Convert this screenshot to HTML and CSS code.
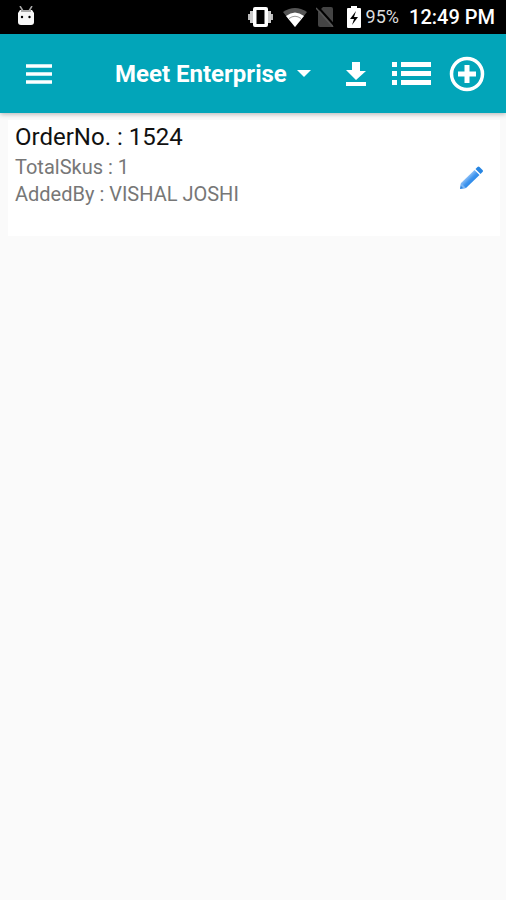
FILE: index.html
```html
<!DOCTYPE html>
<html lang="en">
<head>
<meta charset="utf-8">
<meta name="viewport" content="width=device-width, initial-scale=1">
<title>Orders</title>
<link rel="stylesheet" href="styles.css">
</head>
<body>
<div class="status-bar">
  <svg class="droid" width="18" height="20" viewBox="0 0 18 20" aria-hidden="true">
    <path d="M3 0l3 5M15 0l-3 5" stroke="#aaa" stroke-width="1.5"/>
    <path d="M3 4h12l2 3v9q0 3-3 3H4q-3 0-3-3V7z" fill="#f8f8f8"/>
    <path d="M4 5h10" stroke="#aaa" stroke-width="2"/>
    <circle cx="5" cy="11" r="1.2"/><circle cx="12.500" cy="11" r="1.2"/>
  </svg>
  <div class="status-icons">
    <svg width="27" height="20" viewBox="0 0 27 20" aria-hidden="true">
      <path d="M8 0h11q2 0 2 2v16q0 2-2 2H8q-2 0-2-2V2q0-2 2-2zM9.500 3v14h8V3z" fill="#fff" fill-rule="evenodd"/>
      <path d="M3 4h3v12H3zM21 4h3v12h-3z" fill="#ccc"/><path d="M1 7h2v6H1zM24 7h2v6h-2z" fill="#bbb"/>
    </svg>
    <svg width="24" height="19" viewBox="0 0 24 19" aria-hidden="true">
      <path d="M12 19L0 4Q12-4 24 4z" fill="#555"/>
      <path d="M12 19L3 8Q12 1 21 8z" fill="#fff"/>
      <path d="M6 10.500Q12 6 18 10.500" fill="none" stroke="#999" stroke-width="1"/>
    </svg>
    <svg class="no-sim" width="19" height="20" viewBox="0 0 19 20" aria-hidden="true">
      <path d="M7 0h8q2 0 2 2v18H4q-2 0-2-2V5z" fill="#444"/>
      <path d="M2 0l17 19" stroke="#000" stroke-width="2"/>
      <path d="M0 1l17 19" stroke="#555" stroke-width="1.5"/>
    </svg>
    <svg width="14" height="22" viewBox="0 0 14 22" aria-hidden="true">
      <path d="M4 0h6v2h3q1 0 1 1v18q0 1-1 1H1q-1 0-1-1V3q0-1 1-1h3z" fill="#fff"/>
      <path d="M9 5l-6 8h4l-2 6 6-8H7z"/>
    </svg>
  </div>
  <span class="battery-level">95%</span>
  <span class="clock">12:49 PM</span>
</div>
<header class="app-bar">
  <button class="icon-button" aria-label="Menu">
    <svg width="26" height="20" viewBox="0 0 26 20"><path d="M0 2h26M0 10h26M0 18h26" stroke="#fff" stroke-width="3.500"/></svg>
  </button>
  <div class="picker">
    <select class="picker-select" aria-label="Enterprise"><option>Meet Enterprise</option></select>
    <svg width="14" height="7" viewBox="0 0 14 7" aria-hidden="true"><path d="M0 0h14L7 7z" fill="#fff"/></svg>
  </div>
  <div class="actions">
    <button class="icon-button" aria-label="Download">
      <svg width="22" height="26" viewBox="0 0 22 26"><path d="M7 1h8v9h6L11 19 1 9h6zM1 21h20v4H1z" fill="#fff"/></svg>
    </button>
    <button class="icon-button" aria-label="List">
      <svg width="46" height="24" viewBox="-7 0 46 24"><path d="M0 0h5v5H0zM9 0h30v5H9zM0 9h5v5H0zM9 9h30v5H9zM0 18h5v5H0zM9 18h30v5H9z" fill="#fff"/></svg>
    </button>
    <button class="icon-button" aria-label="Add">
      <svg width="36" height="36" viewBox="0 0 36 36"><circle cx="18" cy="18" r="15.500" fill="none" stroke="#fff" stroke-width="3.500"/><path d="M18 9v18M9 18h18" stroke="#fff" stroke-width="5"/></svg>
    </button>
  </div>
</header>
<main class="orders">
  <article class="order">
    <div>
      <h1 class="order-number">OrderNo. : 1524</h1>
      <p class="order-detail">TotalSkus : 1</p>
      <p class="order-detail">AddedBy : VISHAL JOSHI</p>
    </div>
    <button class="icon-button" aria-label="Edit order">
      <svg width="24" height="24" viewBox="0 0 24 24">
        <defs><linearGradient id="pencil" x1="0.300" y1="0.300" x2="0.700" y2="0.700"><stop offset="0" stop-color="#a9d0fb"/><stop offset="0.550" stop-color="#3e94ee"/><stop offset="1" stop-color="#2384e6"/></linearGradient></defs>
        <path d="M2 17L15.500 4l5 5L7 22l-6 1z" fill="url(#pencil)"/>
        <path d="M1 23l1-6 5 5z" fill="#78b4f4"/><path d="M1 23l1-3 2 2z" fill="#2f83dd"/>
        <path d="M16.500 3l2-2q1-1 2 0l3 3q1 1 0 2l-2 2z" fill="#2685e2"/>
      </svg>
    </button>
  </article>
</main>
</body>
</html>
```
FILE: styles.css
```css
* {
  box-sizing: border-box;
}

body {
  margin: 0;
  min-height: 100vh;
  background: #fafafa;
  color: #111;
  font-family: Roboto, "Liberation Sans", sans-serif;
}

svg {
  display: block;
}

.status-bar {
  display: flex;
  align-items: center;
  height: 34px;
  padding: 0 11px 0 17px;
  background: #000;
  color: #fff;
}

.droid {
  margin-bottom: 2px;
}

.status-icons {
  display: flex;
  align-items: center;
  gap: 9px;
  margin-left: auto;
}

.no-sim {
  margin-right: 3px;
}

.battery-level {
  margin-left: 5px;
  color: #ddd;
  font-size: 18px;
  line-height: 20px;
}

.clock {
  margin-left: 10px;
  font-size: 20px;
  font-weight: 500;
  line-height: 20px;
}

.app-bar {
  display: flex;
  align-items: center;
  height: 79px;
  padding: 0 21px 0 26px;
  background: #02a5b9;
  box-shadow: 0 1px 5px rgba(0, 0, 0, 0.3);
}

.icon-button {
  padding: 0;
  border: 0;
  background: none;
  cursor: pointer;
}

.picker {
  display: flex;
  align-items: center;
  gap: 10px;
  margin-left: 63px;
}

.picker-select {
  appearance: none;
  padding: 0;
  border: 0;
  background: none;
  color: #fff;
  font-family: inherit;
  font-size: 24px;
  font-weight: 700;
  line-height: 32px;
}

.actions {
  display: flex;
  align-items: center;
  gap: 18px;
  margin-left: auto;
}

.orders {
  padding: 7px 6px 7px 8px;
}

.order {
  display: flex;
  align-items: center;
  justify-content: space-between;
  min-height: 116px;
  padding: 0 17px 0 7px;
  background: #fff;
}

.order-number,
.order-detail {
  margin: 0;
  font-weight: 400;
}

.order > div {
  align-self: flex-start;
}

.order-number {
  font-size: 24px;
  line-height: 34px;
}

.order-detail {
  color: #777;
  font-size: 20px;
  line-height: 27px;
}
```
